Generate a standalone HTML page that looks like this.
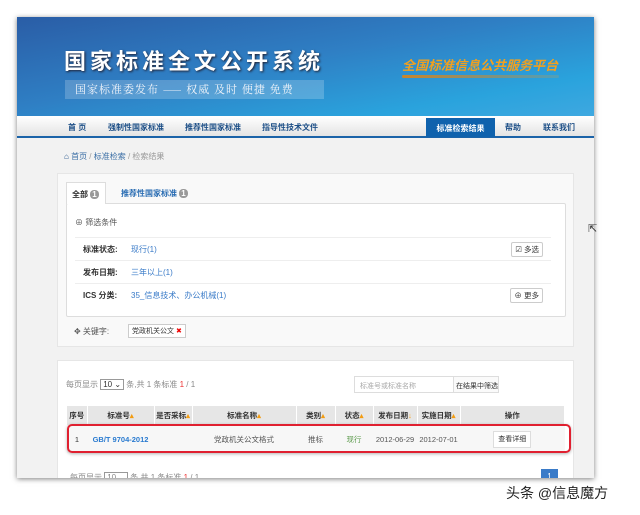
<!DOCTYPE html>
<html><head><meta charset="utf-8"><style>
*{margin:0;padding:0;box-sizing:border-box}
body{width:640px;height:515px;background:#fff;font-family:"Liberation Sans","Noto Sans CJK SC",sans-serif;font-size:8px;color:#333;position:relative;overflow:hidden}
.frame{position:absolute;left:17px;top:17px;width:577px;height:461px;background:#f2f2f2;box-shadow:0 1px 5px rgba(0,0,0,.5);overflow:hidden}
.banner{position:absolute;left:0;top:0;width:577px;height:99px;background:linear-gradient(170deg,#2a5da6 0%,#2f7fc4 45%,#2aa3dd 80%,#3ea8e0 100%)}
.t1{position:absolute;left:47px;top:27px;font-size:22px;letter-spacing:4px;font-weight:bold;color:#fff;text-shadow:1px 1px 2px #223;white-space:nowrap}
.t2{position:absolute;left:48px;top:63px;width:259px;height:19px;background:rgba(255,255,255,.2);color:#f0f4fa;font-size:11px;letter-spacing:1px;line-height:19px;padding-left:10px;font-family:"Noto Serif CJK SC",serif;white-space:nowrap}
.t3{position:absolute;left:385px;top:38px;color:#f0a020;font-size:13px;font-style:italic;font-weight:bold;white-space:nowrap}
.t3b{position:absolute;left:385px;top:58px;width:157px;height:3px;background:linear-gradient(90deg,#c9862a,rgba(220,160,60,.2));border-radius:2px}
.nav{position:absolute;left:0;top:99px;width:577px;height:22px;background:linear-gradient(#fff,#e4e4e4);border-bottom:2px solid #1b63a8}
.nav span{position:absolute;top:6px;font-size:8px;font-weight:bold;color:#1d4f87;white-space:nowrap}
.nav .act{top:2px;height:19px;background:#0f62ad;color:#fff;padding-top:5px;width:69px;text-align:center}
.bc{position:absolute;left:47px;top:134px;font-size:8px;color:#999}
.bc b{font-weight:normal;color:#3a6ea5}
.p{position:absolute;background:#f9f9f9;border:1px solid #e6e6e6}
.box{position:absolute;background:#fff;border:1px solid #ddd;border-radius:2px}
a{color:#3a7bc8;text-decoration:none}
.row{position:absolute;left:8px;width:476px;border-top:1px solid #eee;height:23px}
.lab{position:absolute;left:8px;top:6px;font-weight:bold;color:#333}
.val{position:absolute;left:56px;top:6px;color:#3a7bc8}
.btn{position:absolute;right:8px;top:4px;border:1px solid #ccc;border-radius:2px;padding:1px 3px;font-size:7.5px;background:#fff}
table{position:absolute;left:50px;top:389px;width:498px;border-collapse:collapse;font-size:7.5px;table-layout:fixed}
th{background:#e6e6e6;height:19px;font-weight:bold;border-right:1px solid #fff;color:#333;white-space:nowrap}
td{height:28px;text-align:center;white-space:nowrap}
.s{color:#f39c12}
</style></head><body>
<div class="frame">
<div class="banner">
<div class="t1">国家标准全文公开系统</div>
<div class="t2">国家标准委发布 —— 权威 及时 便捷 免费</div>
<div class="t3">全国标准信息公共服务平台</div><div class="t3b"></div>
</div>
<div class="nav">
<span style="left:51px">首 页</span><span style="left:91px">强制性国家标准</span><span style="left:168px">推荐性国家标准</span><span style="left:245px">指导性技术文件</span>
<span class="act" style="left:409px">标准检索结果</span><span style="left:488px">帮助</span><span style="left:526px">联系我们</span>
</div>
<div class="bc"><b style="color:#1d4f87">⌂</b> <b>首页</b> / <b>标准检索</b> / 检索结果</div>
<div class="p" style="left:40px;top:156px;width:517px;height:174px">
<div style="position:absolute;left:8px;top:8px;width:40px;height:22px;background:#fff;border:1px solid #ddd;border-bottom:none;z-index:2;font-weight:bold;padding:6px 0 0 5px">全部 <span style="background:#999;color:#fff;border-radius:4px;padding:0 2px">1</span></div>
<div style="position:absolute;left:63px;top:14px;color:#2a6db3;font-weight:bold">推荐性国家标准 <span style="background:#999;color:#fff;border-radius:4px;padding:0 2px">1</span></div>
</div>
<div class="box" style="left:49px;top:186px;width:500px;height:114px">
<div style="position:absolute;left:8px;top:13px;color:#555">⊕ 筛选条件</div>
<div class="row" style="top:33px"><span class="lab">标准状态:</span><span class="val">现行(1)</span><span class="btn">☑ 多选</span></div>
<div class="row" style="top:56px"><span class="lab">发布日期:</span><span class="val">三年以上(1)</span></div>
<div class="row" style="top:79px"><span class="lab">ICS 分类:</span><span class="val">35_信息技术、办公机械(1)</span><span class="btn">⊕ 更多</span></div>
</div>
<div style="position:absolute;left:57px;top:309px;color:#555">✥ 关键字:</div>
<div style="position:absolute;left:111px;top:307px;border:1px solid #ccc;background:#fff;padding:1px 3px;font-size:7px">党政机关公文 <span style="color:#e00">✖</span></div>
<div class="p" style="left:40px;top:343px;width:517px;height:130px;background:#fff"></div>
<div style="position:absolute;left:49px;top:362px;color:#888">每页显示 <span style="border:1px solid #999;padding:0 2px;color:#333">10 ⌄</span> 条,共 1 条标准 <span style="color:#e33">1</span> / 1</div>
<div style="position:absolute;left:337px;top:359px;width:100px;height:17px;border:1px solid #ddd;background:#fff;color:#aaa;font-size:7px;padding:4px 5px;white-space:nowrap">标准号或标准名称</div>
<div style="position:absolute;left:436px;top:359px;width:46px;height:17px;border:1px solid #ddd;background:#fafafa;font-size:7px;padding:4px 2px;white-space:nowrap">在结果中筛选</div>
<table>
<colgroup><col style="width:20px"><col style="width:67px"><col style="width:38px"><col style="width:104px"><col style="width:39px"><col style="width:38px"><col style="width:44px"><col style="width:43px"><col></colgroup>
<tr><th>序号</th><th>标准号<span class="s">▴</span></th><th>是否采标<span class="s">▴</span></th><th>标准名称<span class="s">▴</span></th><th>类别<span class="s">▴</span></th><th>状态<span class="s">▴</span></th><th>发布日期<span class="s">↓</span></th><th>实施日期<span class="s">▴</span></th><th>操作</th></tr>
<tr style="background:#f7f7f7"><td>1</td><td><a style="font-weight:bold;color:#2a7bd0">GB/T 9704-2012</a></td><td></td><td style="color:#555">党政机关公文格式</td><td style="color:#555">推标</td><td style="color:#5a9a4a">现行</td><td style="color:#555">2012-06-29</td><td style="color:#555">2012-07-01</td><td><span style="border:1px solid #ddd;background:#fff;padding:4px 4px;font-size:7px">查看详细</span></td></tr>
</table>
<div style="position:absolute;left:50px;top:407px;width:504px;height:29px;border:2px solid #e02030;border-radius:5px;box-shadow:0 1px 3px rgba(0,0,0,.3)"></div>
<div style="position:absolute;left:53px;top:455px;color:#888">每页显示 <span style="border:1px solid #999;padding:0 2px">10 ⌄</span> 条,共 1 条标准 <span style="color:#e33">1</span> / 1</div>
<div style="position:absolute;left:524px;top:452px;width:17px;height:15px;background:#3a7bc8;color:#fff;text-align:center;padding-top:3px">1</div>
</div>
<div style="position:absolute;left:506px;top:483px;font-size:14px;color:#222">头条 @信息魔方</div>
<div style="position:absolute;left:588px;top:222px;font-size:11px;color:#333">⇱</div>
</body></html>
